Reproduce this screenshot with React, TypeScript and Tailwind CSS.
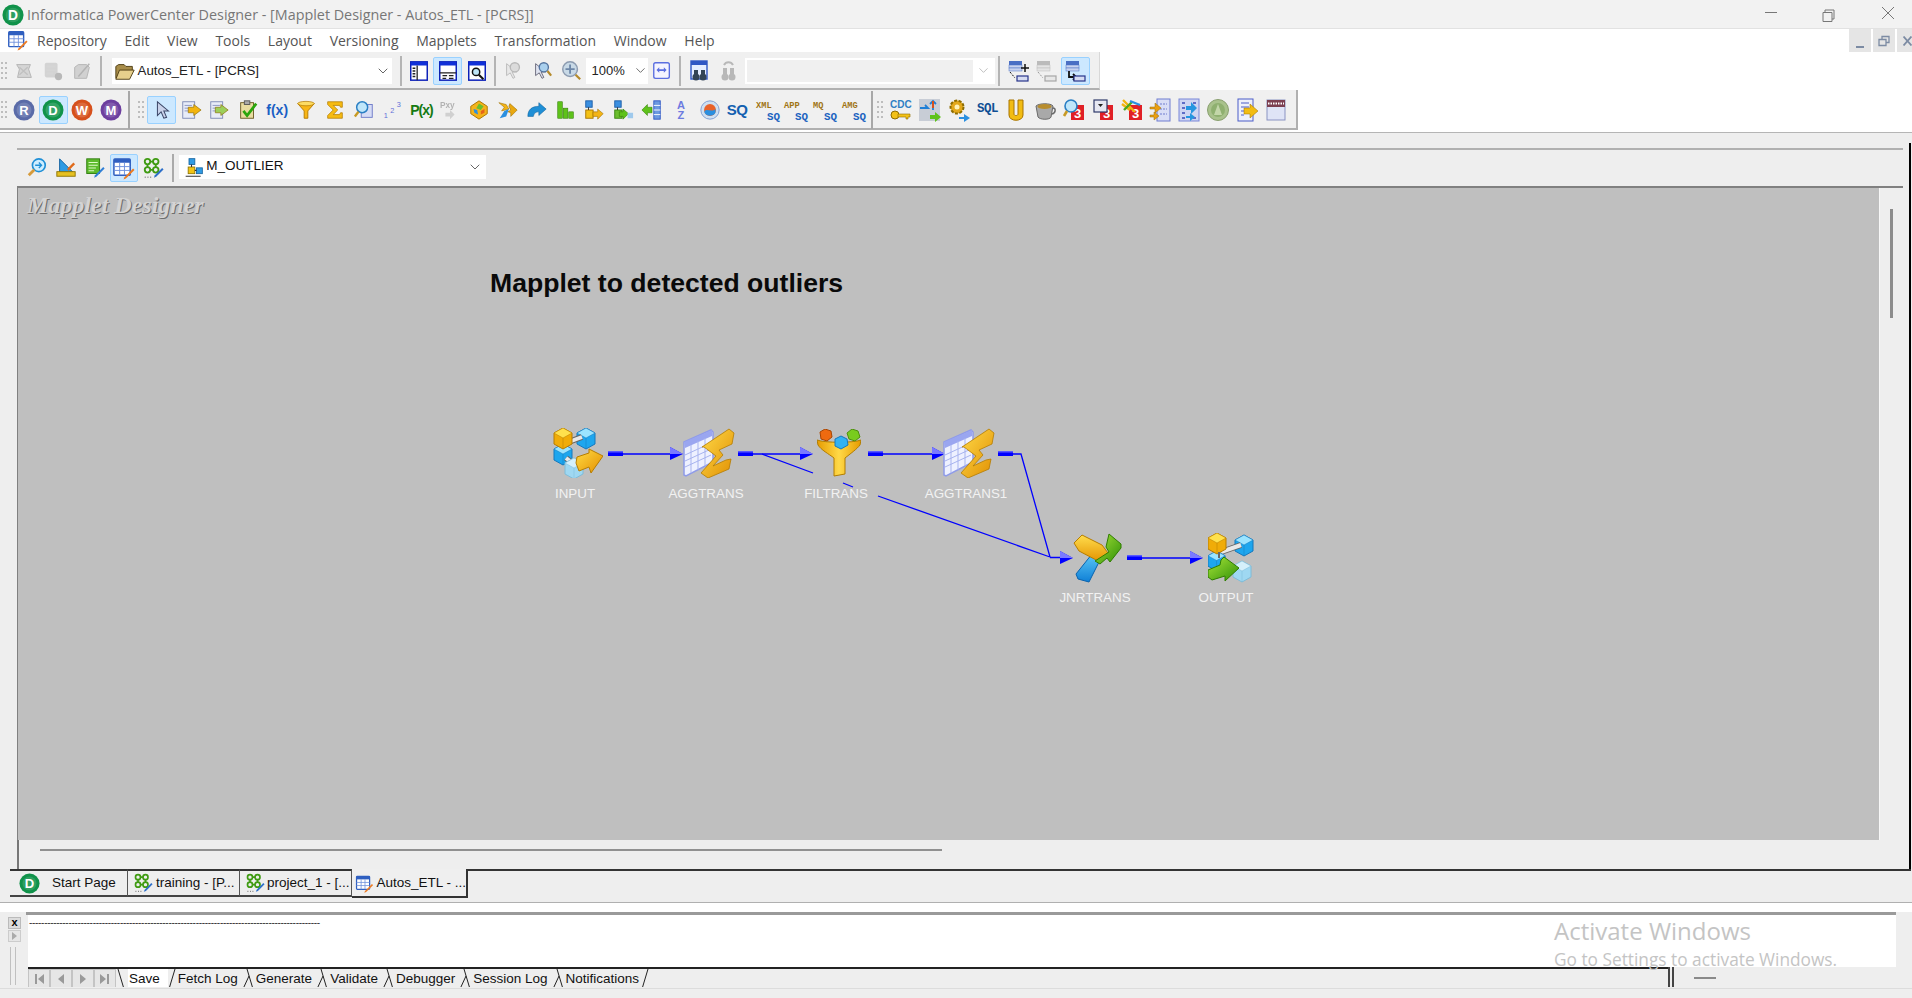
import { FC, ReactNode } from "react";
import { ChevronDown } from "lucide-react";

const Svg: FC<{ children: ReactNode; size?: number; className?: string }> = ({ children, size = 24, className = "" }) => (
  <svg width={size} height={size} viewBox="0 0 24 24" className={className}>
    {children}
  </svg>
);

// toolbar slot, every icon on the bars sits on a 29px pitch
const Slot: FC<{ children: ReactNode; active?: boolean; faded?: boolean }> = ({ children, active, faded }) => (
  <div
    className={
      "w-[28.85px] h-[28px] shrink-0 flex items-center justify-center rounded-[2px] border " +
      (active ? "bg-[#cce8ff] border-[#99d1ff] " : "border-transparent ") +
      (faded ? "opacity-40 grayscale" : "")
    }
  >
    {children}
  </div>
);

const Sep = () => <div className="w-[2px] h-[30px] bg-[#b4b4b4] mx-[3px] shrink-0" />;

const Gripper = () => (
  <div className="w-[8px] h-[30px] shrink-0 mx-[1px] grid grid-cols-2 gap-y-[3px] content-center">
    {[0, 1, 2, 3, 4, 5, 6, 7].map((i) => (
      <span key={i} className="w-[2px] h-[2px] bg-[#bdbdbd]" />
    ))}
  </div>
);

const Badge: FC<{ letter: string; color: string }> = ({ letter, color }) => (
  <Svg size={24}>
    <circle cx="12" cy="12" r="10.5" fill={color} />
    <circle cx="12" cy="12" r="7.5" fill="#fff" opacity="0.15" />
    <text x="12" y="16.5" textAnchor="middle" fontSize="13" fontWeight="700" fill="#fff" fontFamily="Liberation Sans">
      {letter}
    </text>
  </Svg>
);

const PanelIcon: FC<{ kind: number }> = ({ kind }) => (
  <Svg size={22}>
    <rect x="3" y="2" width="18" height="20" fill="#fff" stroke="#0b1fb8" strokeWidth="1.6" />
    <rect x="3" y="2" width="18" height="4" fill="#1030d8" />
    {kind === 0 && <path d="M10 6v16M5 9h3M5 12h3M5 15h3M5 18h3" stroke="#222" strokeWidth="1.4" />}
    {kind === 1 && <path d="M3 14h18M6 17h5M13 17h5M6 20h4M13 20h5" stroke="#222" strokeWidth="1.4" />}
    {kind === 2 && (
      <>
        <circle cx="11" cy="13" r="4" fill="#bfe6f7" stroke="#111" strokeWidth="1.6" />
        <path d="M14 16l5 5" stroke="#111" strokeWidth="2.2" />
      </>
    )}
  </Svg>
);

const Sigma: FC<{ size?: number }> = ({ size = 22 }) => (
  <Svg size={size}>
    <path d="M4 3h16v6h-2l-1-2H10l5 5-5 5h7l1-2h2v6H4v-3l6-6-6-6z" fill="#f6bb12" stroke="#b27b00" strokeWidth="0.8" />
  </Svg>
);

const Funnel = () => (
  <Svg size={22}>
    <path d="M3 5h18l-7 8v8h-4v-8z" fill="#f8b616" stroke="#b57a00" strokeWidth="1" />
    <ellipse cx="12" cy="5" rx="9" ry="2.4" fill="#fddc63" stroke="#b57a00" strokeWidth="0.8" />
  </Svg>
);

const Txt: FC<{ top: string; bottom?: string; color?: string }> = ({ top, bottom, color = "#a07414" }) => (
  <Svg size={26}>
    <text x="1" y="10" fontSize="8" fill={color} fontFamily="Liberation Mono" fontWeight="700">
      {top}
    </text>
    <text x="11" y="21" fontSize="10" fill="#2063c0" fontFamily="Liberation Mono" fontWeight="700">
      {bottom ?? "SQ"}
    </text>
  </Svg>
);

const PageArrow: FC<{ color?: string; flip?: boolean }> = ({ color = "#f2b40e", flip }) => (
  <Svg size={22}>
    <rect x="3" y="3" width="13" height="18" fill="#e8ecf8" stroke="#7d88b5" />
    <path d="M5 7h8M5 10h8M5 13h8" stroke="#8a94c0" />
    <path
      d={flip ? "M22 12l-8-6v3H8v6h6v3z" : "M23 12l-8-6v3H9v6h6v3z"}
      fill={color}
      stroke="#8d6c00"
      strokeWidth="0.7"
    />
  </Svg>
);

const Red3: FC<{ inner: ReactNode }> = ({ inner }) => (
  <Svg size={24}>
    <rect x="9" y="7" width="13" height="15" fill="#e02026" />
    <text x="15.5" y="20" textAnchor="middle" fontSize="13" fontWeight="700" fill="#fff" fontFamily="Liberation Sans">
      3
    </text>
    {inner}
  </Svg>
);

const RowsIcon: FC<{ mode: "add" | "del" | "move" }> = ({ mode }) => (
  <Svg size={24}>
    <rect x="3" y="2" width="13" height="4" fill="#4a6fc4" />
    <rect x="3" y="6" width="13" height="3" fill="#c9d3ef" stroke="#4a6fc4" strokeWidth="0.5" />
    <rect x="3" y="9" width="13" height="3" fill="#c9d3ef" stroke="#4a6fc4" strokeWidth="0.5" />
    {mode === "add" && <path d="M19 5v8M15 9h8" stroke="#111" strokeWidth="1.5" />}
    {mode === "move" ? (
      <path d="M6 12v6h7M10 15l3 3-3 3" stroke="#111" strokeWidth="1.8" fill="none" />
    ) : (
      <path d="M4 13l5 6" stroke="#111" strokeWidth="1" strokeDasharray="2 1.5" />
    )}
    <rect x="11" y="17" width="11" height="5" fill="#d6dcf2" stroke="#27348b" strokeWidth="1.2" />
  </Svg>
);

// one isometric cube of the input/output icons
const Cube: FC<{ x: number; y: number; s?: number; side: string; top: string; line: string }> = ({ x, y, s = 1, side, top, line }) => (
  <g transform={`translate(${x} ${y}) scale(${s})`}>
    <path d="M0 5l9-5 9 5v11l-9 5-9-5z" fill={side} stroke={line} />
    <path d="M0 5l9-5 9 5-9 5z" fill={top} stroke={line} strokeWidth="0.5" />
    <path d="M9 10v11" stroke={line} strokeWidth="0.5" />
  </g>
);

const Rod: FC<{ d: string }> = ({ d }) => (
  <>
    <path d={d} stroke="#666" strokeWidth="6" fill="none" />
    <path d={d} stroke="#e8e8e8" strokeWidth="4" fill="none" />
  </>
);

const CubeNet: FC<{ output?: boolean }> = ({ output }) => {
  const blue = { side: "#1da6ee", top: "#9be4ff", line: "#1578bd" };
  const yellow = { side: "#f0ac08", top: "#ffe14d", line: "#b67d00" };
  const pale = { side: "#9fd8f2", top: "#d5f0fb", line: "#7fbcd8" };
  return (
    <svg width="50" height="50" viewBox="0 0 50 50">
      <defs>
        <linearGradient id="arrowY" x1="0" y1="0" x2="1" y2="1">
          <stop offset="0" stopColor="#ffdc45" />
          <stop offset="1" stopColor="#e48f00" />
        </linearGradient>
        <linearGradient id="arrowG" x1="0" y1="0" x2="1" y2="1">
          <stop offset="0" stopColor="#a9e63a" />
          <stop offset="1" stopColor="#2e8f06" />
        </linearGradient>
      </defs>
      {output ? (
        <g>
          <Cube x={27} y={2} {...blue} />
          <Rod d="M13 19l20-7" />
          <Cube x={0} y={18} s={0.95} {...blue} />
          <Cube x={0} y={0} {...yellow} />
          <path d="M11 19v6" stroke="#666" strokeWidth="2" />
          <Cube x={25} y={28} {...pale} />
          <path d="M0 37l12-5 1-5 3-3 15 11-14 13v-5L4 47l-4-3z" fill="url(#arrowG)" stroke="#2f7d00" />
        </g>
      ) : (
        <g>
          <Cube x={24} y={0} {...blue} />
          <Cube x={1} y={16} {...blue} />
          <Rod d="M13 15l16-6" />
          <Rod d="M13 30l15 12" />
          <Cube x={1} y={0} {...yellow} />
          <Cube x={12} y={30} {...pale} />
          <path d="M24 29l12-4v-4l14 7-12 17-2-6-10 4-3-8z" fill="url(#arrowY)" stroke="#b67d00" />
        </g>
      )}
    </svg>
  );
};

const Aggregator: FC<{ id: string }> = ({ id }) => (
  <svg width="52" height="50" viewBox="0 0 52 50">
    <defs>
      <linearGradient id={id} x1="0" y1="0" x2="1" y2="1">
        <stop offset="0" stopColor="#ffdb4a" />
        <stop offset="1" stopColor="#e08e00" />
      </linearGradient>
    </defs>
    <path d="M1 14L28 2l2 2v30L3 48l-2-1z" fill="#eef1ff" stroke="#8f9be8" strokeWidth="1.5" />
    <path d="M1 14L29 2v6L2 20z" fill="#9aa6f0" />
    <path
      d="M8 17v28M15 13v29M22 10v28M2 27l26-12M2 33l26-12M2 39l26-12"
      stroke="#a7b3ef"
      strokeWidth="1"
      fill="none"
    />
    <path
      d="M19 19L46 1l5 4-2 11-13 6 4 5-10 11 13-6 5-1-2 10-21 9-7-5 15-17-12-9z"
      fill={"url(#" + id + ")"}
      stroke="#b57c00"
      strokeWidth="0.8"
    />
  </svg>
);

const FunnelNode = () => (
  <svg width="44" height="48" viewBox="0 0 44 48">
    <defs>
      <linearGradient id="fn" x1="0" y1="0" x2="1" y2="0">
        <stop offset="0" stopColor="#e69b00" />
        <stop offset="0.5" stopColor="#ffd948" />
        <stop offset="1" stopColor="#e69b00" />
      </linearGradient>
    </defs>
    <path d="M0 11c8 3 36 3 44 0l-1 5c-3 4-10 9-15 13v16l-11 2V29C12 25 4 21 1 16z" fill="url(#fn)" stroke="#b27d00" />
    <path d="M3 3l5-3 6 2 1 6-5 4-6-2z" fill="#ee6a10" stroke="#a84500" />
    <path d="M35 0l6 2 2 6-5 4-6-2-2-6z" fill="#79cc1e" stroke="#4d8f0e" />
    <path d="M18 10l6-3 6 3 1 6-7 4-6-3z" fill="#32b2f2" stroke="#1578bd" />
  </svg>
);

const JoinerNode = () => (
  <svg width="50" height="50" viewBox="0 0 50 50">
    <defs>
      <linearGradient id="jb" x1="0" y1="0" x2="0" y2="1">
        <stop offset="0" stopColor="#5cc8f7" />
        <stop offset="1" stopColor="#0f7fd6" />
      </linearGradient>
      <linearGradient id="jy" x1="0" y1="0" x2="0" y2="1">
        <stop offset="0" stopColor="#ffdd4d" />
        <stop offset="1" stopColor="#e39200" />
      </linearGradient>
      <linearGradient id="jg" x1="0" y1="0" x2="1" y2="1">
        <stop offset="0" stopColor="#a8e33a" />
        <stop offset="1" stopColor="#2e8f06" />
      </linearGradient>
    </defs>
    <path d="M19 21h11L16 49l-11-3-2-5z" fill="url(#jb)" stroke="#0a63ae" />
    <path d="M1 10L9 2l20 10 6 8-8 9L6 18z" fill="url(#jy)" stroke="#b67d00" />
    <path d="M22 28l14-9-3-5 3-13 12 10 0 4-11 14-3-4-7 6z" fill="url(#jg)" stroke="#2f7d00" />
  </svg>
);

const Node: FC<{ label: string; className: string; labelClass: string; children: ReactNode }> = ({
  label,
  className,
  labelClass,
  children,
}) => (
  <>
    <div className={"absolute " + className}>{children}</div>
    <div className={"absolute -translate-x-1/2 text-[13.4px] leading-[16px] text-[#f2f2f2] whitespace-nowrap " + labelClass}>{label}</div>
  </>
);

const Head: FC<{ x: number; y: number }> = ({ x, y }) => (
  <g>
    <path d={`M${x - 13} ${y - 7}L${x} ${y}L${x - 13} ${y + 6}z`} fill="#0000ff" />
    <path d={`M${x - 13} ${y - 7}L${x} ${y}H${x - 13}z`} fill="#7a7aff" />
  </g>
);

const Port: FC<{ x: number; y: number }> = ({ x, y }) => (
  <g>
    <rect x={x} y={y - 3} width="15" height="5" fill="#0000ff" />
    <rect x={x} y={y - 3} width="15" height="1.5" fill="#5a5aff" />
  </g>
);

const Arrow: FC<{ x1: number; x2: number; y: number }> = ({ x1, x2, y }) => (
  <g>
    <Port x={x1} y={y} />
    <path d={`M${x1 + 15} ${y}H${x2 - 6}`} stroke="#0000ff" strokeWidth="1.4" />
    <Head x={x2} y={y} />
  </g>
);

const TopTab: FC<{ label: string; icon: ReactNode; w: string; active?: boolean; gap?: string; pad?: string }> = ({
  label,
  icon,
  w,
  active,
  gap = "gap-[2px]",
  pad = "pl-[3px]",
}) => (
  <div
    className={
      "flex items-center text-[13.5px] text-[#111] whitespace-nowrap overflow-hidden shrink-0 " +
      gap + " " + w + " " + pad + " " +
      (active ? "border-r-2 border-b-2 border-[#333] bg-[#efefef] h-[29px] pt-[2px]" : "h-[28px] border-t-2 border-t-[#333] border-r border-r-[#555] border-b-2 border-b-[#444] bg-[#eeeeee]")
    }
  >
    {icon}
    <span>{label}</span>
  </div>
);

const ClusterIcon: FC<{ size?: number }> = ({ size = 20 }) => (
  <Svg size={size}>
    <g fill="none" stroke="#3f9b12" strokeWidth="2">
      <circle cx="6" cy="5" r="3" />
      <circle cx="15" cy="5" r="3" />
      <circle cx="6" cy="14" r="3" />
      <circle cx="15" cy="14" r="3" />
      <path d="M6 8v3M15 8v3M9 5h3M9 14h3" />
    </g>
    <path d="M14 20l8-8 1.5 1.5-8 8-2.5 1z" fill="#2d6fc9" />
    <path d="M3 22h1M6 22h1M9 22h1" stroke="#333" />
  </Svg>
);

const GridIcon: FC<{ size?: number }> = ({ size = 20 }) => (
  <Svg size={size}>
    <rect x="2" y="2" width="17" height="17" rx="1" fill="#fff" stroke="#2f5fc0" strokeWidth="1.6" />
    <rect x="2" y="2" width="17" height="4" fill="#2f5fc0" />
    <path d="M8 6v13M13 6v13M2 10h17M2 14h17" stroke="#6e90dc" />
    <path d="M13 21l9-9 1.5 1.5-9 9-2.5 1z" fill="#ed7b22" />
  </Svg>
);

const DLogo: FC<{ size?: number }> = ({ size = 20 }) => (
  <Svg size={size}>
    <circle cx="12" cy="12" r="11.5" fill="#10924a" />
    <circle cx="12" cy="12" r="8" fill="#fff" opacity="0.12" />
    <text x="12" y="17.5" textAnchor="middle" fontSize="15" fontWeight="700" fill="#fff" fontFamily="Liberation Sans">
      D
    </text>
  </Svg>
);

const Lambda = () => (
  <svg width="14" height="20" viewBox="0 0 14 20" className="shrink-0">
    <path d="M5 0l6 20M1 20l6-13" stroke="#222" fill="none" />
  </svg>
);

const NavBtn: FC<{ d: string }> = ({ d }) => (
  <div className="w-[22px] h-[20px] bg-[#e6e6e6] border border-[#c4c4c4] flex items-center justify-center">
    <svg width="12" height="12" viewBox="0 0 12 12">
      <path d={d} fill="#9a9a9a" />
    </svg>
  </div>
);

const menus = ["Repository", "Edit", "View", "Tools", "Layout", "Versioning", "Mapplets", "Transformation", "Window", "Help"];

export default function App() {
  return (
    <div className="w-[1912px] h-[998px] relative overflow-hidden flex flex-col bg-[#eeeeee] font-['Liberation_Sans',sans-serif]">
      {/* title bar */}
      <div className="h-[29px] shrink-0 flex items-center bg-[#f2f2f2] pl-[2px] pt-[1px] text-[#777] border-b border-[#e2e2e2]">
        <DLogo size={22} />
        <span className="ml-[3px] text-[14.35px] font-['Open_Sans',sans-serif]">
          Informatica PowerCenter Designer - [Mapplet Designer - Autos_ETL - [PCRS]]
        </span>
        <div className="ml-auto flex items-center">
          <svg width="150" height="20" viewBox="0 0 150 20">
            <path d="M3 7.5h12" stroke="#777" />
            <path d="M61 7.5h9v9h-9zM63 7.5v-2.5h9v9h-2" stroke="#777" fill="none" />
            <path d="M120 2l12 12M132 2l-12 12" stroke="#777" />
          </svg>
        </div>
      </div>

      {/* menu bar */}
      <div className="h-[23px] shrink-0 flex items-center bg-white pl-[7px] text-[14px] text-[#555] font-['Open_Sans',sans-serif]">
        <GridIcon size={21} />
        <div className="ml-[9px] flex gap-[17.7px]">
          {menus.map((m) => (
            <span key={m}>{m}</span>
          ))}
        </div>
        <div className="ml-auto flex gap-[2px] h-full">
          <div className="w-[22px] h-[23px] bg-[#e5e5e5] flex items-end justify-center pb-[4px]">
            <span className="w-[8px] h-[2px] bg-[#7c8ba3]" />
          </div>
          <div className="w-[22px] h-[23px] bg-[#e5e5e5] flex items-center justify-center">
            <svg width="12" height="12" viewBox="0 0 12 12">
              <path d="M1 4.5h7v6H1zM4 4V1.5h7v6H8.5" stroke="#7c8ba3" fill="none" strokeWidth="1.3" />
            </svg>
          </div>
          <div className="w-[15px] h-[23px] bg-[#e5e5e5] flex items-center pl-[6px]">
            <svg width="9" height="10" viewBox="0 0 9 10">
              <path d="M0.5 0.5l8 9M8.5 0.5l-8 9" stroke="#7c8ba3" strokeWidth="1.8" />
            </svg>
          </div>
        </div>
      </div>

      {/* toolbar 1 */}
      <div className="h-[38px] shrink-0 flex bg-white">
        <div className="w-[1100px] flex items-center bg-[#f0f0f0] pt-[1px] border-r border-[#d8d8d8] border-b-2 border-b-[#b0b0b0] text-[13.3px] text-[#222]">
          <Gripper />
          <Slot faded>
            <Svg size={22}>
              <path d="M4 5h15l-2 5 3 9H5l2-9z" fill="#78c850" stroke="#555" />
              <path d="M7 8l9 8M16 8l-9 8" stroke="#d7691a" strokeWidth="1.5" />
            </Svg>
          </Slot>
          <Slot faded>
            <Svg size={22}>
              <rect x="3" y="3" width="14" height="16" rx="2" fill="#aaa" />
              <path d="M5 7h10M5 11h10M5 15h7" stroke="#5fd41c" strokeWidth="2" />
              <circle cx="18" cy="18" r="4" fill="#666" />
            </Svg>
          </Slot>
          <Slot faded>
            <Svg size={22}>
              <path d="M4 20V8l4-3h9l3 3-3 12z" fill="#c9a24a" stroke="#6f5a20" />
              <path d="M8 18L20 4" stroke="#6f5a20" strokeWidth="1.6" />
            </Svg>
          </Slot>
          <Sep />
          <div className="w-[280px] h-[26px] ml-[7px] mr-[5px] bg-white flex items-center pl-[2px] shrink-0">
            <Svg size={22}>
              <path d="M2 20V7l3-2h6l2 2h7v4" fill="#a88d4a" stroke="#4c3a10" />
              <path d="M2 21l4-10h16l-5 10z" fill="#e6cf8c" stroke="#4c3a10" />
            </Svg>
            <span className="ml-[2px] whitespace-nowrap">Autos_ETL - [PCRS]</span>
            <ChevronDown size={16} className="ml-auto mr-[1px] text-[#666]" strokeWidth={1.5} />
          </div>
          <Sep />
          <Slot><PanelIcon kind={0} /></Slot>
          <Slot active><PanelIcon kind={1} /></Slot>
          <Slot><PanelIcon kind={2} /></Slot>
          <Sep />
          <Slot faded>
            <Svg size={22}>
              <path d="M5 4v13l4-3 3 6 2-1-3-6h5z" fill="#dde" stroke="#667" />
              <circle cx="14" cy="8" r="5" fill="#9cc4e4" stroke="#666" strokeWidth="1.5" />
            </Svg>
          </Slot>
          <Slot>
            <Svg size={22}>
              <path d="M5 4v13l4-3 3 6 2-1-3-6h5z" fill="#dfe3f0" stroke="#667" />
              <circle cx="14" cy="8" r="5" fill="#a9d0ee" stroke="#5475a0" strokeWidth="1.5" />
              <path d="M18 12l4 5" stroke="#b48a2a" strokeWidth="2.4" />
            </Svg>
          </Slot>
          <Slot>
            <Svg size={22}>
              <circle cx="11" cy="10" r="8" fill="#c8d9e6" stroke="#8c9bb0" strokeWidth="1.6" />
              <path d="M11 5v10M6 10h10" stroke="#6d87a8" strokeWidth="2" />
              <path d="M17 16l5 5" stroke="#b48a2a" strokeWidth="2.4" />
            </Svg>
          </Slot>
          <div className="w-[62px] h-[26px] bg-white flex items-center pl-[6px] shrink-0 text-[13px]">
            <span>100%</span>
            <ChevronDown size={15} className="ml-auto text-[#666]" strokeWidth={1.5} />
          </div>
          <Slot>
            <Svg size={22}>
              <rect x="3" y="3" width="17" height="17" rx="2" fill="#f4f4ff" stroke="#5b6fe0" strokeWidth="1.5" />
              <path d="M6 11l3-3v2h5V8l3 3-3 3v-2H9v2z" fill="#5b6fe0" />
            </Svg>
          </Slot>
          <Sep />
          <Slot>
            <Svg size={24}>
              <rect x="4" y="2" width="16" height="18" fill="#e4ecff" stroke="#2f56c4" strokeWidth="1.4" />
              <rect x="4" y="2" width="16" height="4" fill="#2f56c4" />
              <circle cx="9" cy="18" r="3.5" fill="#345" />
              <circle cx="16" cy="18" r="3.5" fill="#345" />
              <rect x="7" y="11" width="4" height="6" fill="#345" />
              <rect x="14" y="11" width="4" height="6" fill="#345" />
            </Svg>
          </Slot>
          <Slot faded>
            <Svg size={24}>
              <circle cx="9" cy="18" r="3.5" fill="#666" />
              <circle cx="16" cy="18" r="3.5" fill="#666" />
              <rect x="7" y="9" width="4" height="8" fill="#666" />
              <rect x="14" y="9" width="4" height="8" fill="#666" />
              <path d="M8 6a5 5 0 019 0" stroke="#666" fill="none" strokeWidth="2" />
            </Svg>
          </Slot>
          <div className="w-[250px] h-[26px] ml-[3px] bg-white p-[2px] flex shrink-0">
            <div className="flex-1 bg-[#f0f0f0]" />
            <div className="w-[20px] flex items-center justify-center">
              <ChevronDown size={15} className="text-[#bbb]" strokeWidth={1.5} />
            </div>
          </div>
          <Sep />
          <Slot><RowsIcon mode="add" /></Slot>
          <Slot faded><RowsIcon mode="del" /></Slot>
          <Slot active><RowsIcon mode="move" /></Slot>
        </div>
      </div>

      {/* toolbar 2 */}
      <div className="h-[40px] shrink-0 flex bg-white">
        <div className="flex items-center bg-[#f0f0f0] pt-[1px] border-r-2 border-b-2 border-[#b0b0b0]">
          <Gripper />
          <Slot><Badge letter="R" color="#5a6ba8" /></Slot>
          <Slot active><Badge letter="D" color="#10934a" /></Slot>
          <Slot><Badge letter="W" color="#d6501c" /></Slot>
          <Slot><Badge letter="M" color="#6d3f9f" /></Slot>
          <div className="w-[2px] h-[38px] bg-[#a8a8a8] ml-[3px] mr-[7px]" />
          <Gripper />
          <Slot active>
            <Svg size={22}>
              <path d="M7 3v15l4-4 3 7 3-1-3-7h5z" fill="#c9d2ea" stroke="#3a4566" strokeWidth="1.1" />
            </Svg>
          </Slot>
          <Slot><PageArrow /></Slot>
          <Slot><PageArrow color="#9ccf5a" flip /></Slot>
          <Slot>
            <Svg size={22}>
              <rect x="4" y="4" width="14" height="17" fill="#e8dca0" stroke="#6a5a20" />
              <rect x="8" y="2" width="6" height="4" fill="#aaa" stroke="#555" />
              <path d="M7 13l4 5 10-13" stroke="#2aa50c" strokeWidth="3" fill="none" />
            </Svg>
          </Slot>
          <Slot>
            <span className="text-[14px] font-bold text-[#1b5fc4] leading-none">f(x)</span>
          </Slot>
          <Slot><Funnel /></Slot>
          <Slot><Sigma /></Slot>
          <Slot>
            <Svg size={22}>
              <rect x="9" y="6" width="12" height="14" fill="#d6dcf5" stroke="#6b78c8" />
              <circle cx="10" cy="9" r="6" fill="#bfe6fa" stroke="#2a7fc4" strokeWidth="1.6" />
              <path d="M6 14l-4 5" stroke="#c79a24" strokeWidth="2.6" />
            </Svg>
          </Slot>
          <Slot>
            <Svg size={22}>
              <text x="2" y="21" fontSize="8" fill="#5f6fd8" fontFamily="Liberation Sans">1</text>
              <text x="9" y="15" fontSize="8" fill="#5f6fd8" fontFamily="Liberation Sans">2</text>
              <text x="16" y="9" fontSize="8" fill="#5f6fd8" fontFamily="Liberation Sans">3</text>
            </Svg>
          </Slot>
          <Slot>
            <span className="text-[14px] font-bold text-[#157a12] leading-none tracking-[-1px]">P(x)</span>
          </Slot>
          <Slot faded>
            <Svg size={22}>
              <text x="1" y="10" fontSize="9" fontWeight="700" fill="#555" fontFamily="Liberation Sans">Pxy</text>
              <path d="M10 12v5H7l5 5 5-5h-3v-5z" fill="#b8a43a" transform="rotate(-90 12 17)" />
            </Svg>
          </Slot>
          <Slot>
            <Svg size={22}>
              <path d="M12 2l9 6v8l-9 6-9-6V8z" fill="#f4b31a" stroke="#a87400" />
              <path d="M12 5l5 3-3 4-5-2z" fill="#6bbf2c" />
              <path d="M6 11l4 1 1 5-4-2z" fill="#2a8fe0" />
              <path d="M14 13l4-2v4l-4 2z" fill="#e6631a" />
            </Svg>
          </Slot>
          <Slot>
            <Svg size={22}>
              <path d="M2 4l8 2 3 5-8 2 3-4z" fill="#f3b416" stroke="#9a6d00" strokeWidth="0.6" />
              <path d="M3 21l5-8 5-2-3 8z" fill="#2a8fe0" />
              <path d="M13 8l1-3 8 7-7 7 0-4-3-1 3-2z" fill="#e9a810" stroke="#9a6d00" strokeWidth="0.6" />
            </Svg>
          </Slot>
          <Slot>
            <Svg size={22}>
              <path d="M2 19c0-8 5-11 12-11V4l8 7-8 7v-4c-3 0-5 1-6 5z" fill="#1f8fd6" stroke="#0d5f9a" strokeWidth="0.6" />
            </Svg>
          </Slot>
          <Slot>
            <Svg size={22}>
              <rect x="3" y="3" width="5" height="18" fill="#5ec21a" stroke="#2f7d00" strokeWidth="0.6" />
              <rect x="9" y="10" width="5" height="11" fill="#5ec21a" stroke="#2f7d00" strokeWidth="0.6" />
              <rect x="15" y="14" width="5" height="7" fill="#5ec21a" stroke="#2f7d00" strokeWidth="0.6" />
            </Svg>
          </Slot>
          <Slot>
            <Svg size={22}>
              <rect x="3" y="2" width="7" height="7" fill="#3b8fe0" stroke="#1c5fa8" />
              <rect x="3" y="12" width="8" height="9" fill="#f3c116" stroke="#a87400" />
              <path d="M6 9v3" stroke="#333" />
              <path d="M22 16l-6-5v3h-5v5h5v3z" fill="#f3b416" stroke="#9a6d00" strokeWidth="0.6" />
            </Svg>
          </Slot>
          <Slot>
            <Svg size={22}>
              <rect x="3" y="2" width="7" height="7" fill="#3b8fe0" stroke="#1c5fa8" />
              <rect x="3" y="12" width="8" height="9" fill="#6cbe2e" stroke="#3a8510" />
              <path d="M6 9v3" stroke="#333" />
              <path d="M18 16l-6-5v3H8v5h4v3z" fill="#5ec21a" stroke="#2f7d00" strokeWidth="0.6" />
              <rect x="17" y="15" width="6" height="6" fill="#9fc9ec" />
            </Svg>
          </Slot>
          <Slot>
            <Svg size={22}>
              <path d="M1 12l6-6v3h5v6H7v3z" fill="#5ec21a" stroke="#2f7d00" strokeWidth="0.6" />
              <rect x="14" y="2" width="7" height="20" fill="#6d9ae0" stroke="#2f56c4" />
              <path d="M14 7h7M14 12h7M14 17h7" stroke="#fff" />
            </Svg>
          </Slot>
          <Slot>
            <div className="flex flex-col items-center text-[11px] font-bold leading-[10px] text-[#6d7be0]">
              <span>A</span>
              <span>Z</span>
            </div>
          </Slot>
          <Slot>
            <Svg size={22}>
              <circle cx="12" cy="12" r="10" fill="#cfe0f2" stroke="#7d9ad0" />
              <circle cx="12" cy="12" r="6.5" fill="#e9622a" />
              <path d="M6 13c3-3 8 2 12-2v4a7 7 0 01-12 0z" fill="#2a8fe0" />
            </Svg>
          </Slot>
          <Slot>
            <span className="text-[15px] font-bold text-[#1360b0] leading-none tracking-[-0.5px] mr-[3px]">SQ</span>
          </Slot>
          <Slot><Txt top="XML" /></Slot>
          <Slot><Txt top="APP" /></Slot>
          <Slot><Txt top="MQ" /></Slot>
          <Slot><Txt top="AMG" /></Slot>
          <div className="w-[2px] h-[38px] bg-[#a8a8a8] mx-[3px]" />
          <Gripper />
          <Slot>
            <Svg size={24}>
              <text x="1" y="10" fontSize="10" fontWeight="700" fill="#2f7fc4" fontFamily="Liberation Sans">CDC</text>
              <circle cx="6" cy="17" r="4" fill="#f3c116" stroke="#8d6c00" />
              <path d="M9 16h12v3h-2v2h-2v-2H9z" fill="#f3c116" stroke="#8d6c00" strokeWidth="0.6" />
            </Svg>
          </Slot>
          <Slot>
            <Svg size={24}>
              <rect x="1" y="1" width="21" height="22" fill="#c8cdd6" />
              <path d="M2 10h8l-3-3M15 3v9M12 6l3-3 3 3" stroke="#1f7fd6" strokeWidth="1.8" fill="none" />
              <path d="M15 3v7" stroke="#d8501c" strokeWidth="2" />
              <path d="M12 17h5v-3l6 5-6 5v-3h-5z" fill="#5ec21a" />
            </Svg>
          </Slot>
          <Slot>
            <Svg size={24}>
              <circle cx="10" cy="9" r="6.5" fill="#e3a81a" stroke="#8d6c00" strokeDasharray="3 1.5" strokeWidth="2" />
              <circle cx="10" cy="9" r="2.5" fill="#fff2b8" />
              <path d="M12 19h5v-3l6 4-6 4v-3h-5z" fill="#2a8fe0" />
            </Svg>
          </Slot>
          <Slot>
            <span className="text-[12.5px] font-bold text-[#0f4f94] leading-none font-['Liberation_Mono'] tracking-[-0.5px]">SQL</span>
          </Slot>
          <Slot>
            <Svg size={24}>
              <path d="M5 2h5v14c0 2 4 2 4 0V2h5v15c0 7-14 7-14 0z" fill="#f2bc12" stroke="#a87400" />
            </Svg>
          </Slot>
          <Slot>
            <Svg size={24}>
              <path d="M3 8c3-3 15-3 17 0l-2 11c-1 3-11 3-13 0z" fill="#a9a9a9" stroke="#6a6a6a" />
              <ellipse cx="11.5" cy="8.5" rx="7" ry="2.4" fill="#b88d2e" />
              <path d="M20 10c3 0 3 5-1 6" stroke="#6a6a6a" fill="none" strokeWidth="1.5" />
            </Svg>
          </Slot>
          <Slot>
            <Red3
              inner={
                <>
                  <circle cx="9" cy="8" r="6" fill="#bfe6fa" stroke="#2a7fc4" strokeWidth="1.6" />
                  <path d="M5 13l-3 5" stroke="#c79a24" strokeWidth="2.6" />
                </>
              }
            />
          </Slot>
          <Slot>
            <Red3
              inner={
                <>
                  <rect x="3" y="2" width="13" height="12" fill="#e6e8f2" stroke="#2f3a6a" strokeWidth="1.2" />
                  <path d="M7 6h5l-2.5 3z" fill="#222" />
                </>
              }
            />
          </Slot>
          <Slot>
            <Red3
              inner={
                <>
                  <path d="M2 6l8 6M3 2l12 12" stroke="#f2b40e" strokeWidth="2.4" />
                  <path d="M4 12l8-8" stroke="#4aa81a" strokeWidth="2.4" />
                  <path d="M10 3l10 4" stroke="#2a8fe0" strokeWidth="2.4" />
                </>
              }
            />
          </Slot>
          <Slot>
            <Svg size={24}>
              <rect x="9" y="1" width="13" height="22" fill="#d9def6" stroke="#6f7dd0" />
              <path d="M12 6h7M12 11h7M12 16h7" stroke="#6f7dd0" strokeDasharray="2 1" />
              <path d="M2 9h5V5l6 5-6 5v-4H2z" fill="#ea9f10" stroke="#9a6d00" strokeWidth="0.5" />
              <path d="M2 17h4v-3l5 4-5 4v-3H2z" fill="#ea9f10" stroke="#9a6d00" strokeWidth="0.5" />
            </Svg>
          </Slot>
          <Slot>
            <Svg size={24}>
              <rect x="2" y="1" width="20" height="22" fill="#cfd5f2" stroke="#7886d8" />
              <path d="M5 5h3M5 10h3M5 15h3M5 20h3M16 5h3M16 20h3" stroke="#3b4ab8" strokeWidth="1.4" />
              <path d="M9 8h5V4l6 6-6 6v-4H9z" fill="#2596e0" />
              <path d="M9 18h4v-3l5 4-5 4v-3H9z" fill="#2596e0" />
            </Svg>
          </Slot>
          <Slot>
            <Svg size={24}>
              <circle cx="12" cy="12" r="10.5" fill="#a9c28c" stroke="#8aa070" />
              <circle cx="12" cy="12" r="7" fill="#8fb070" />
              <path d="M12 6l4 11H8z" fill="#c3d6a9" />
            </Svg>
          </Slot>
          <Slot>
            <Svg size={24}>
              <rect x="3" y="1" width="15" height="22" fill="#eef0fa" stroke="#4a5cc8" />
              <path d="M6 5h8M6 9h8M6 13h3M6 17h3" stroke="#4a5cc8" />
              <path d="M23 13l-8-7v4H9v6h6v4z" fill="#f2bc12" stroke="#9a6d00" strokeWidth="0.5" />
            </Svg>
          </Slot>
          <Slot>
            <Svg size={24}>
              <rect x="3" y="2" width="18" height="20" fill="#dfe4f6" stroke="#8a93c2" />
              <rect x="3" y="2" width="18" height="7" fill="#7c3f50" />
              <path d="M4 5.5h16" stroke="#fff" strokeDasharray="1.5 1" strokeWidth="2" />
            </Svg>
          </Slot>
          <div className="w-[6px]" />
        </div>
      </div>

      <div className="h-[2px] shrink-0 bg-white" />
      <div className="h-[1px] shrink-0 bg-[#b5b5b5]" />

      {/* mapplet child window */}
      <div className="h-[738px] shrink-0 flex flex-col pl-[17px] pr-[1px] pt-[10px]">
        <div className="flex-1 flex flex-col border-r-2 border-black pr-[6px] min-h-0">
          <div className="mt-[5px] h-[2px] bg-[#b0b0b0] shrink-0" />
          <div className="h-[36px] shrink-0 flex items-center pl-[6px]">
            <Slot>
              <Svg size={22}>
                <circle cx="14" cy="9" r="7" fill="#cfeeff" stroke="#1f8fd6" strokeWidth="1.8" />
                <path d="M10 9h7M14 6l3 3-3 3" stroke="#1f8fd6" strokeWidth="1.4" fill="none" />
                <path d="M9 14l-6 6" stroke="#d69a3a" strokeWidth="3" />
              </Svg>
            </Slot>
            <Slot>
              <Svg size={22}>
                <path d="M5 2l15 15H5z" fill="#2f9be4" stroke="#14639f" />
                <rect x="2" y="16" width="20" height="5" fill="#e6c020" stroke="#8d7400" />
                <path d="M14 14l7-7" stroke="#e06a1a" strokeWidth="2.5" />
              </Svg>
            </Slot>
            <Slot>
              <Svg size={22}>
                <rect x="3" y="2" width="14" height="16" fill="#5dbb2c" stroke="#2d7a0c" />
                <path d="M5 6h10M5 9h10M5 12h8M5 15h6" stroke="#eaffd6" />
                <path d="M12 20l9-9 1.5 1.5-9 9-2.5 1z" fill="#2f7fd6" />
              </Svg>
            </Slot>
            <Slot active><GridIcon size={23} /></Slot>
            <Slot><ClusterIcon size={22} /></Slot>
            <div className="w-[2px] h-[28px] bg-[#aaa] mx-[5px]" />
            <div className="w-[307px] h-[24px] mb-[3px] bg-white flex items-center pl-[5px] text-[13.5px] text-[#111]">
              <Svg size={20}>
                <rect x="6" y="2" width="7" height="7" fill="#2f9be4" stroke="#14639f" />
                <rect x="5" y="12" width="8" height="8" fill="#f2c414" stroke="#8d7400" />
                <rect x="15" y="13" width="7" height="7" fill="#2f9be4" stroke="#14639f" />
                <path d="M9 9v3M13 16h2M2 23h18" stroke="#333" strokeWidth="1.3" />
              </Svg>
              <span className="ml-[2px]">M_OUTLIER</span>
              <ChevronDown size={16} className="ml-auto mr-[3px] text-[#666]" strokeWidth={1.5} />
            </div>
          </div>

          <div className="flex-1 flex flex-col min-h-0">
            <div className="flex h-[654px] shrink-0 border-t-2 border-[#808080]">
              <div className="w-[1862px] relative bg-[#bfbfbf] border-l border-[#808080] overflow-hidden shrink-0">
                <div className="absolute left-[9px] top-[3px] font-['Liberation_Serif',serif] italic font-bold text-[24px] leading-[28px] text-[#d4d4d4] [text-shadow:1px_1px_0_#6e6e6e]">
                  Mapplet Designer
                </div>
                <div className="absolute left-[472px] top-[79px] font-bold text-[26.6px] leading-[32px] text-[#0a0a0a] whitespace-nowrap">
                  Mapplet to detected outliers
                </div>

                <svg className="absolute inset-0 w-[1862px] h-[652px]" viewBox="18 188 1862 652">
                  <Arrow x1={608} x2={683} y={454} />
                  <Arrow x1={738} x2={813} y={454} />
                  <Arrow x1={868} x2={945} y={454} />
                  <Arrow x1={1127} x2={1203} y={558} />
                  <Port x={998} y={454} />
                  <path d="M1013 454h8L1050 557M762 454l51 19M843 483l10 4M878 496l172 61M1050 557.5h12" stroke="#0000ff" strokeWidth="1.3" fill="none" />
                  <Head x={1073} y={558} />
                </svg>

                <Node label="INPUT" className="left-[535px] top-[240px]" labelClass="left-[557px] top-[298px]"><CubeNet /></Node>
                <Node label="AGGTRANS" className="left-[665px] top-[240px]" labelClass="left-[688px] top-[298px]"><Aggregator id="ag1" /></Node>
                <Node label="FILTRANS" className="left-[799px] top-[241px]" labelClass="left-[818px] top-[298px]"><FunnelNode /></Node>
                <Node label="AGGTRANS1" className="left-[925px] top-[240px]" labelClass="left-[948px] top-[298px]"><Aggregator id="ag2" /></Node>
                <Node label="JNRTRANS" className="left-[1055px] top-[345px]" labelClass="left-[1077px] top-[402px]"><JoinerNode /></Node>
                <Node label="OUTPUT" className="left-[1190px] top-[345px]" labelClass="left-[1208px] top-[402px]"><CubeNet output /></Node>
              </div>
              <div className="flex-1 pt-[21px] pl-[10px] border-l border-[#f7f7f7]">
                <div className="w-[3px] h-[109px] bg-[#8c8c8c]" />
              </div>
            </div>
            <div className="flex-1 border-l-2 border-[#777] pl-[21px] pt-[9px]">
              <div className="w-[902px] h-[2px] bg-[#909090]" />
            </div>
          </div>
        </div>
      </div>

      {/* window tabs */}
      <div className="h-[31px] shrink-0 flex items-start pl-[10px] -mt-[2px]">
        <div className="flex">
          <TopTab w="w-[118px]" gap="gap-[12px]" pad="pl-[9px]" label="Start Page" icon={<DLogo size={21} />} />
          <TopTab w="w-[112px]" pad="pl-[5px]" gap="gap-[3px]" label="training - [P..." icon={<ClusterIcon size={20} />} />
          <TopTab w="w-[112px]" pad="pl-[5px]" label="project_1 - [..." icon={<ClusterIcon size={20} />} />
          <TopTab w="w-[116px]" active gap="gap-[3px]" label="Autos_ETL - ..." icon={<GridIcon size={20} />} />
        </div>
        <div className="flex-1 h-[2px] bg-[#333] mr-[1px]" />
      </div>
      <div className="h-[1px] shrink-0 bg-[#b0b0b0] mt-[2px]" />
      <div className="h-[9px] shrink-0 bg-white" />

      {/* output window */}
      <div className="h-[75px] shrink-0 flex flex-col">
        <div className="h-[3px] shrink-0 bg-[#9a9a9a] ml-[26px] mr-[16px]" />
        <div className="flex-1 flex min-h-0">
          <div className="w-[28px] shrink-0 pl-[8px] pt-[2px] flex flex-col gap-[1px]">
            <div className="w-[13px] h-[12px] bg-[#dcdcdc] border border-[#bbb] text-[11px] font-bold leading-[9px] text-center text-black">x</div>
            <div className="w-[13px] h-[12px] bg-[#e6e6e6] border border-[#ccc] flex items-center justify-center">
              <svg width="5" height="8" viewBox="0 0 5 8"><path d="M0 0l5 4-5 4z" fill="#aaa" /></svg>
            </div>
            <div className="mt-[4px] ml-[2px] w-[6px] h-[38px] border-x border-[#c0c0c0]" />
          </div>
          <div className="flex-1 flex flex-col min-w-0">
            <div className="h-[52px] shrink-0 flex">
              <div className="flex-1 bg-white pl-[1px] text-[10px] leading-[14px] text-[#333] tracking-[-0.3px] overflow-hidden whitespace-nowrap pt-[1px]">
                {"-".repeat(96)}
              </div>
              <div className="w-[16px] bg-[#eeeeee]" />
            </div>
            <div className="h-[20px] shrink-0 flex text-[13.5px] text-[#111]">
              <div className="w-[1640px] border-t-2 border-[#222] flex items-start overflow-hidden">
                <NavBtn d="M2 1h2v10H2zM11 1v10L5 6z" />
                <NavBtn d="M9 1v10L3 6z" />
                <NavBtn d="M3 1v10l6-5z" />
                <NavBtn d="M1 1v10l6-5zM8 1h2v10H8z" />
                <svg width="12" height="20" viewBox="0 0 12 20" className="shrink-0"><path d="M2 0l6 20" stroke="#222" /></svg>
                <span className="bg-white h-[20px] pl-[1px] pr-[8px]">Save</span>
                <svg width="10" height="20" viewBox="0 0 10 20" className="shrink-0"><path d="M1 20l6-20" stroke="#222" /></svg>
                <span>Fetch Log</span>
                <span className="w-[4px]" />
                <Lambda />
                <span>Generate</span>
                <span className="w-[4px]" />
                <Lambda />
                <span>Validate</span>
                <span className="w-[4px]" />
                <Lambda />
                <span>Debugger</span>
                <span className="w-[4px]" />
                <Lambda />
                <span>Session Log</span>
                <span className="w-[4px]" />
                <Lambda />
                <span>Notifications</span>
                <svg width="12" height="20" viewBox="0 0 12 20" className="shrink-0 ml-[1px]"><path d="M2 20l6-20" stroke="#222" /></svg>
              </div>
              <div className="w-[6px] h-[20px] border-x-2 border-[#444]" />
              <div className="ml-[20px] mt-[10px] w-[22px] h-[2px] bg-[#8a8a8a]" />
            </div>
          </div>
        </div>
      </div>
      <div className="h-[1px] shrink-0 bg-[#dcdcdc] mt-[1px]" />

      {/* activation watermark lies over the output window */}
      <div className="absolute left-[1554px] top-[915px] text-[#c4c4c4] font-['Open_Sans',sans-serif] pointer-events-none whitespace-nowrap">
        <div className="text-[24px] leading-[32px]">Activate Windows</div>
        <div className="text-[17.3px] leading-[22px] mt-[2px]">Go to Settings to activate Windows.</div>
      </div>
    </div>
  );
}
